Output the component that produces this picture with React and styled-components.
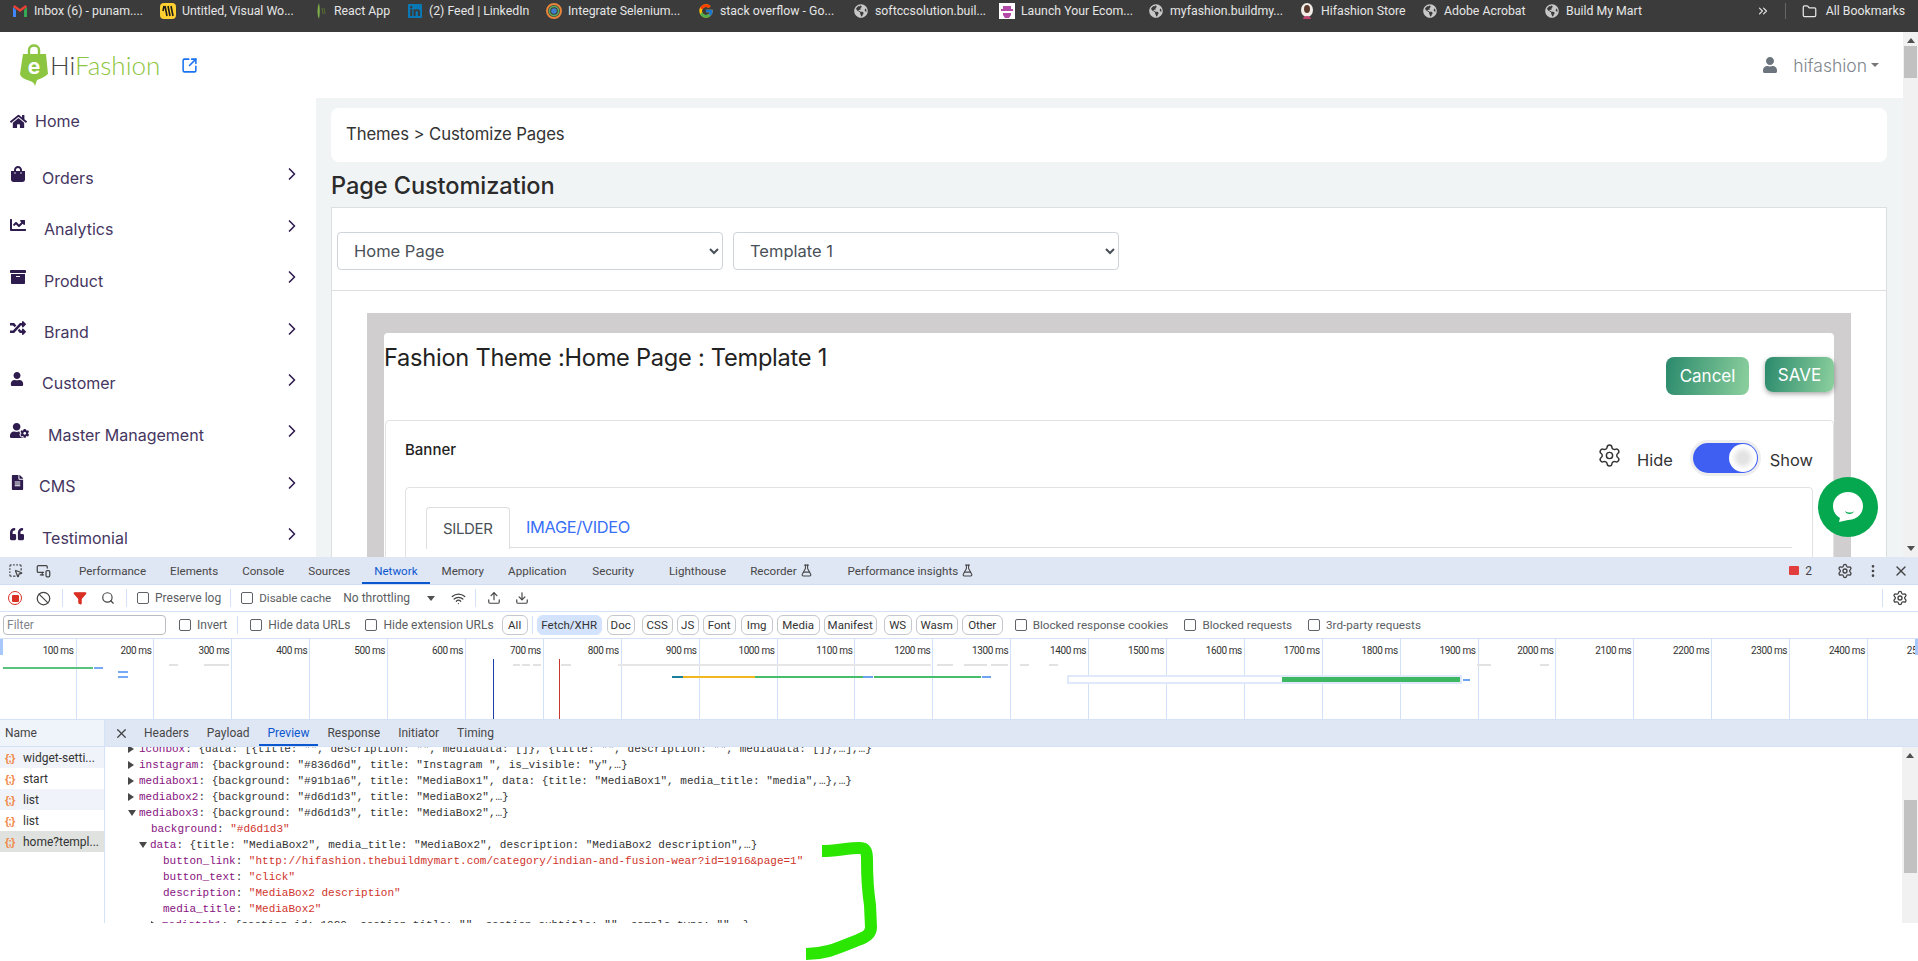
import React from 'react'
import styled, { createGlobalStyle } from 'styled-components'
import {
  FaHome, FaShoppingBag, FaChartLine, FaArchive, FaRandom, FaUser, FaUserCog,
  FaFileAlt, FaQuoteLeft, FaGlobeAmericas, FaLinkedin,
} from 'react-icons/fa'
import { FcGoogle } from 'react-icons/fc'
import {
  ChevronRight, Settings, SquareArrowOutUpRight, Search, Ban, Upload, Download,
  X, EllipsisVertical, FlaskConical, Filter as FilterIcon, Folder, Wifi, ChevronsRight,
  SquareDashedMousePointer, MonitorSmartphone,
} from 'lucide-react'

const GlobalStyle = createGlobalStyle`
  html, body { margin: 0; padding: 0; background: #fff; overflow: hidden; }
  * { box-sizing: border-box; }
`

const Screen = styled.div`
  position: relative;
  width: 1918px;
  height: 961px;
  overflow: hidden;
  display: flex;
  flex-direction: column;
  font-family: Inter, "Liberation Sans", sans-serif;
`

/* bookmarks bar */
const Bookmarks = styled.div`
  flex: 0 0 32px;
  background: #3b3b3b;
  display: flex;
  align-items: flex-start;
  padding: 2px 0 0 12px;
  color: #e6e6e6;
  font: 12.3px/18px Roboto, sans-serif;
  white-space: nowrap;
`
const Bookmark = styled.div`
  flex: 0 0 ${p => p.$w}px;
  display: flex;
  align-items: center;
  gap: 6px;
  overflow: hidden;
`
const Fav = styled.span`
  flex: 0 0 16px;
  height: 16px;
  display: flex;
  align-items: center;
  justify-content: center;
  color: ${p => p.$color || '#c8c8c8'};
`
const BarEnd = styled.div`
  margin-left: auto;
  display: flex;
  align-items: center;
  height: 18px;
  padding-right: 13px;
  gap: 9px;
`
const BarDivider = styled.span`
  width: 1px;
  height: 16px;
  background: #666;
  margin: 0 7px 0 6px;
`

/* page area */
const Viewport = styled.div`
  flex: 0 0 525px;
  display: flex;
  overflow: hidden;
`
const Page = styled.div`
  flex: 1;
  display: flex;
  flex-direction: column;
  min-width: 0;
`
const TopBar = styled.header`
  flex: 0 0 66px;
  background: #fff;
  display: flex;
  align-items: center;
  padding-left: 19px;
`
const LogoText = styled.span`
  font: 300 26px/1 Lato, sans-serif;
  color: #8cc540;
  margin: 0 21px 0 1px;
  b { font-weight: 300; color: #444; }
`
const UserMenu = styled.div`
  margin-left: auto;
  display: flex;
  align-items: center;
  color: #80868b;
  font-size: 17.5px;
  font-weight: 300;
  padding-right: 24px;
  gap: 15px;
  span { display: flex; align-items: center; gap: 4px; }
  i {
    width: 0; height: 0;
    border: 4px solid transparent;
    border-top-color: #777;
    border-bottom: 0;
  }
`
const Body = styled.div`
  flex: 1;
  display: flex;
  min-height: 0;
`
const Sidebar = styled.nav`
  flex: 0 0 316px;
  background: #fff;
  overflow: hidden;
`
const NavRow = styled.div`
  height: 51.45px;
  display: flex;
  align-items: center;
  padding: 0 14px 0 10px;
  color: #2f1c4e;
  font-size: 16px;
  svg { flex: none; }
`
const HomeLink = styled(NavRow)`
  height: 46px;
  margin-bottom: 7.5px;
`
const NavIcon = styled.span`
  flex: 0 0 auto;
  display: flex;
  margin-top: -7px;
`
const NavLabel = styled.span`
  margin-left: ${p => p.$ml}px;
  color: #45365f;
  padding-top: ${p => p.$home ? 0 : 1}px;
`
const NavArrow = styled.span`
  margin-left: auto;
  display: flex;
  margin-top: -6px;
`
const Main = styled.main`
  position: relative;
  flex: 1;
  background: #f1f4f5;
  padding: 10px 16px 0 15px;
  min-width: 0;
  overflow: hidden;
`
const Crumbs = styled.div`
  height: 54px;
  background: #fff;
  border-radius: 8px;
  display: flex;
  align-items: center;
  padding: 0 0 2px 15px;
  font-size: 16.7px;
  color: #333;
  letter-spacing: -0.1px;
`
const PageTitle = styled.h1`
  margin: 0;
  height: 45px;
  padding-top: 2px;
  display: flex;
  align-items: center;
  font-size: 23.6px;
  font-weight: 500;
  color: #2b2b2b;
  letter-spacing: -0.1px;
`
const SelectCard = styled.div`
  height: 84px;
  background: #fff;
  border: 1px solid #dcdfe2;
  display: flex;
  gap: 10px;
  padding: 24px 0 0 5px;
`
const Select = styled.select`
  width: 386px;
  height: 38px;
  padding-left: 12px;
  font: 16.5px Inter, sans-serif;
  color: #495057;
  background: #fff;
  border: 1px solid #ced4da;
  border-radius: 4px;
`
const EditorCard = styled.div`
  background: #fff;
  border: 1px solid #dcdfe2;
  border-top: 0;
  height: 400px;
  padding: 22px 35px 0 35px;
`
const GreyPanel = styled.div`
  background: #d0cecf;
  height: 400px;
  padding: 20px 17px 0 17px;
`
const ThemeCard = styled.div`
  background: #fff;
  border-radius: 4px;
  height: 380px;
  padding-left: 1px;
`
const ThemeHead = styled.div`
  height: 87px;
  display: flex;
  justify-content: space-between;
`
const ThemeTitle = styled.h2`
  margin: 12px 0 0 -1px;
  font-size: 23.6px;
  line-height: 26px;
  font-weight: 400;
  color: #222;
  letter-spacing: -0.25px;
`
const Actions = styled.div`
  display: flex;
  gap: 16px;
  padding-top: 24px;
  align-items: flex-start;
`
const GradientBtn = styled.button`
  height: ${p => p.$h}px;
  width: ${p => p.$w}px;
  border: 0;
  border-radius: 8px;
  background: linear-gradient(100deg, #2a8a6c, #8dd09e);
  color: #fff;
  font: 17px Inter, sans-serif;
  box-shadow: ${p => p.$raised ? '0 2px 5px rgba(0,0,0,.35)' : 'none'};
`
const SectionCard = styled.section`
  border: 1px solid #e2e2e2;
  border-radius: 4px;
  height: 300px;
  padding: 0 20px 0 19px;
`
const SectionHead = styled.div`
  height: 66px;
  display: flex;
  align-items: flex-start;
  justify-content: space-between;
`
const SectionName = styled.span`
  margin-top: 19px;
  font-size: 15px;
  font-weight: 500;
  color: #222;
`
const VisibleRow = styled.div`
  display: flex;
  align-items: center;
  margin-top: 25px;
  font-size: 16.4px;
  color: #333;
`
const GearIcon = styled(Settings)`
  color: #333;
  margin: -9px 15px 0 -1px;
`
const ToggleTrack = styled.span`
  width: 65px;
  height: 30px;
  margin: -3px 12px 0 20px;
  border-radius: 15px;
  background: #3f5ff2;
  box-shadow: 0 0 0 3px #eee;
  display: flex;
  justify-content: flex-end;
  padding: 1px;
`
const ToggleKnob = styled.span`
  width: 28px;
  height: 28px;
  border-radius: 50%;
  background: radial-gradient(circle, #e3e3e3 0 24%, #fff 60%, #f2f2f2);
`
const TabsBox = styled.div`
  border: 1px solid #e2e2e2;
  border-radius: 4px;
  height: 200px;
  padding: 19px 20px 0;
`
const TabsLine = styled.div`
  height: 41px;
  border-bottom: 1px solid #dedede;
  display: flex;
  align-items: stretch;
`
const Tab = styled.div`
  width: ${p => p.$active ? '84px' : 'auto'};
  height: ${p => p.$active ? '42px' : '40px'};
  padding: 0 16px;
  display: flex;
  align-items: center;
  font-size: ${p => p.$active ? 15 : 16.4}px;
  letter-spacing: -0.35px;
  background: #fff;
  color: ${p => p.$active ? '#495057' : '#3a6ff7'};
  border: ${p => p.$active ? '1px solid #dedede' : '0'};
  border-bottom: 0;
  border-radius: 4px 4px 0 0;
`
const ChatBubble = styled.div`
  position: absolute;
  left: 1502px;
  top: 379px;
  width: 60px;
  height: 60px;
  border-radius: 50%;
  background: #05a84f;
  display: flex;
  align-items: center;
  justify-content: center;
`

/* scrollbars */
const Scroll = styled.div`
  flex: 0 0 ${p => p.$w}px;
  position: relative;
  background: #f1f1f1;
  display: flex;
  flex-direction: column;
  align-items: center;
  padding-top: ${p => p.$pad}px;
`
const ScrollUp = styled.i`
  width: 0; height: 0;
  border: 4px solid transparent;
  border-top: 0;
  border-bottom: 5px solid #505050;
`
const ScrollDown = styled(ScrollUp)`
  position: absolute;
  bottom: 6px;
  border-bottom: 0;
  border-top: 5px solid #505050;
`
const ScrollThumb = styled.i`
  display: block;
  width: 13px;
  height: ${p => p.$h}px;
  margin-top: ${p => p.$top}px;
  background: #c1c1c1;
`

/* devtools */
const DevTools = styled.div`
  flex: 0 0 366px;
  display: flex;
  flex-direction: column;
  font: 12px Roboto, sans-serif;
  color: #444;
  overflow: hidden;
`
const DevTabs = styled.div`
  flex: 0 0 28px;
  background: #dfe6f4;
  border-bottom: 1px solid #cfdcf3;
  display: flex;
  align-items: stretch;
  padding-left: 1px;
  font-size: 11.6px;
`
const DevIcon = styled.span`
  flex: 0 0 28px;
  display: flex;
  align-items: center;
  justify-content: center;
  margin: 0 ${p => p.$mr || 0}px 0 ${p => p.$ml || 0}px;
  color: ${p => p.$color || '#444'};
`
const DevTab = styled.div`
  padding: 0 12px;
  margin-left: ${p => p.$ml || 0}px;
  display: flex;
  align-items: center;
  gap: 3px;
  color: ${p => p.$active ? '#0b57d0' : '#474747'};
  box-shadow: ${p => p.$active ? 'inset 0 -2px 0 #0b57d0' : 'none'};
`
const TabGroupGap = styled.span`
  flex: 0 0 10px;
`
const DevTabsEnd = styled.div`
  margin-left: auto;
  display: flex;
  align-items: center;
  padding-right: 3px;
`
const IssueCount = styled.span`
  display: flex;
  align-items: center;
  gap: 6px;
  margin-right: 19px;
  font-size: 12px;
  i {
    width: 10px; height: 9px;
    background: #e33e3e;
    border-radius: 1px;
  }
`
const ToolRow = styled.div`
  flex: 0 0 ${p => p.$h}px;
  background: #fff;
  border-bottom: 1px solid #d5e1f6;
  display: flex;
  align-items: center;
  padding-left: ${p => p.$pl || 0}px;
  white-space: nowrap;
`
const Divider = styled.span`
  flex: none;
  width: 1px;
  height: 18px;
  background: #d5e1f6;
  margin: 0 ${p => p.$mr ?? 8}px 0 ${p => p.$push ? 'auto' : `${p.$ml ?? 8}px`};
`
const Check = styled.label`
  display: flex;
  align-items: center;
  gap: 6px;
  margin-left: ${p => p.$ml || 0}px;
  font-size: ${p => p.$fs || 12}px;
  color: #5a5e63;
  input {
    width: 12px; height: 12px;
    margin: 0;
    appearance: none;
    border: 1px solid #5f6368;
    border-radius: 2px;
    background: #fff;
  }
`
const RecordDot = styled.span`
  width: 14px;
  height: 14px;
  border: 1.5px solid #d93025;
  border-radius: 50%;
  display: flex;
  align-items: center;
  justify-content: center;
  &::after { content: ''; width: 7px; height: 7px; background: #d93025; border-radius: 1px; }
`
const Throttle = styled.span`
  flex: 0 0 84px;
  margin-left: 12px;
  color: #5a5e63;
`
const ThrottleArrow = styled.i`
  width: 0; height: 0;
  border: 4px solid transparent;
  border-bottom: 0;
  border-top: 5px solid #505050;
`
const FilterBox = styled.div`
  width: 163px;
  height: 20px;
  margin-right: 13px;
  border: 1px solid #b9bcc1;
  border-radius: 4px;
  padding-left: 3px;
  font-size: 12px;
  line-height: 18px;
  color: #80868b;
`
const Chip = styled.span`
  flex: none;
  width: ${p => p.$w}px;
  margin-left: ${p => p.$ml ?? 4}px;
  height: 20px;
  display: flex;
  align-items: center;
  justify-content: center;
  border: 1px solid ${p => p.$on ? '#d3e3fd' : '#c4c7cc'};
  background: ${p => p.$on ? '#d3e3fd' : '#fff'};
  border-radius: 6px;
  color: #333;
  font-size: 11.5px;
`
const Timeline = styled.div`
  flex: 0 0 80px;
  position: relative;
  display: flex;
  margin-left: -1.4px;
  background: #fff;
  overflow: hidden;
`
const Tick = styled.div`
  flex: 0 0 77.9px;
  border-right: 1px solid #d3e1f8;
  text-align: right;
  padding: 5px 2px 0 0;
  font-size: 10px;
  letter-spacing: -0.4px;
  line-height: 13px;
  color: #333;
  white-space: nowrap;
`
const Overview = styled.svg`
  position: absolute;
  left: 1.4px;
  top: 0;
`
const Details = styled.div`
  flex: 0 0 204px;
  display: flex;
  border-top: 1px solid #d5e1f6;
`
const NameCol = styled.div`
  flex: 0 0 105px;
  border-right: 1px solid #d5e1f6;
  display: flex;
  flex-direction: column;
`
const NameHead = styled.div`
  flex: 0 0 27px;
  background: #eff3fa;
  border-bottom: 1px solid #d5e1f6;
  display: flex;
  align-items: center;
  padding-left: 5px;
`
const NameRow = styled.div`
  flex: 0 0 21px;
  display: flex;
  align-items: center;
  gap: 5px;
  padding-left: 5px;
  background: ${p => p.$selected ? '#e0e2df' : p.$alt ? '#f0f3f9' : '#fff'};
  color: #333;
  i {
    font: 700 11px "Liberation Sans", sans-serif;
    color: #f08a4b;
    letter-spacing: -1px;
    width: 13px;
  }
`
const NameFoot = styled.div`
  margin-top: auto;
  flex: 0 0 7px;
  border-top: 1px solid #d5e1f6;
`
const PreviewCol = styled.div`
  flex: 1;
  display: flex;
  flex-direction: column;
  min-width: 0;
`
const PreviewTabs = styled.div`
  flex: 0 0 27px;
  background: #dfe6f4;
  border-bottom: 1px solid #d5e1f6;
  display: flex;
  align-items: stretch;
  padding-left: 9px;
`
const CloseIcon = styled(X)`
  align-self: center;
`
const PreviewTab = styled.div`
  padding: 0 9px;
  display: flex;
  align-items: center;
  margin-left: ${p => p.$first ? 6 : 0}px;
  color: ${p => p.$active ? '#0b57d0' : '#474747'};
  box-shadow: ${p => p.$active ? 'inset 0 -2px 0 #0b57d0' : 'none'};
`
const PreviewBody = styled.div`
  flex: 1;
  display: flex;
  min-height: 0;
`
const JsonPane = styled.div`
  flex: 1;
  overflow: hidden;
  font: 11px/16px "Liberation Mono", monospace;
  color: #333;
  white-space: pre;
  > :first-child { margin-top: -6px; }
`
const JsonLine = styled.div`
  height: 16px;
  padding-left: ${p => p.$pl}px;
  display: flex;
  align-items: center;
`
const Caret = styled.i`
  flex: 0 0 8px;
  margin-right: 3px;
  width: 0; height: 0;
  border-style: solid;
  border-color: transparent;
  ${p => p.$open
    ? 'border-width: 6px 4px 0 4px; border-top-color: #474747; flex-basis: 8px;'
    : 'border-width: 4px 0 4px 6px; border-left-color: #474747; flex-basis: 6px; margin-right: 5px;'}
`
const Key = styled.span`
  color: #881280;
`
const Str = styled.span`
  color: #d0342c;
`
const Scribble = styled.svg`
  position: absolute;
  left: 0;
  top: 0;
  pointer-events: none;
`

const bookmarks = [
  { w: 148, text: 'Inbox (6) - punam....', fav: <GmailIcon /> },
  { w: 152, text: 'Untitled, Visual Wo...', fav: <MiroIcon /> },
  { w: 95, text: 'React App', fav: <ReactAppIcon /> },
  { w: 139, text: '(2) Feed | LinkedIn', fav: <FaLinkedin size={16} color="#0a78b5" /> },
  { w: 152, text: 'Integrate Selenium...', fav: <RingIcon /> },
  { w: 155, text: 'stack overflow - Go...', fav: <FcGoogle size={16} /> },
  { w: 146, text: 'softccsolution.buil...', fav: <FaGlobeAmericas size={14} /> },
  { w: 149, text: 'Launch Your Ecom...', fav: <LaunchIcon /> },
  { w: 151, text: 'myfashion.buildmy...', fav: <FaGlobeAmericas size={14} /> },
  { w: 123, text: 'Hifashion Store', fav: <AvatarIcon /> },
  { w: 122, text: 'Adobe Acrobat', fav: <FaGlobeAmericas size={14} /> },
  { w: 100, text: 'Build My Mart', fav: <FaGlobeAmericas size={14} /> },
]

const navItems = [
  { label: 'Orders', ml: 16, icon: <FaShoppingBag size={16} /> },
  { label: 'Analytics', ml: 18, icon: <FaChartLine size={16} /> },
  { label: 'Product', ml: 18, icon: <FaArchive size={16} /> },
  { label: 'Brand', ml: 18, icon: <FaRandom size={16} /> },
  { label: 'Customer', ml: 18, icon: <FaUser size={14} /> },
  { label: 'Master Management', ml: 19, icon: <FaUserCog size={19} /> },
  { label: 'CMS', ml: 14, icon: <FaFileAlt size={15} /> },
  { label: 'Testimonial', ml: 18, icon: <FaQuoteLeft size={14} /> },
]

const devTabs = ['Performance', 'Elements', 'Console', 'Sources', 'Network', 'Memory', 'Application', 'Security']

const chips = [
  { t: 'Doc', w: 28, ml: 5 }, { t: 'CSS', w: 31, ml: 7 }, { t: 'JS', w: 22 }, { t: 'Font', w: 33 },
  { t: 'Img', w: 32, ml: 5 }, { t: 'Media', w: 43 }, { t: 'Manifest', w: 53 }, { t: 'WS', w: 28, ml: 7 },
  { t: 'Wasm', w: 42 }, { t: 'Other', w: 41 },
]

const ticks = Array.from({ length: 25 }, (_, i) => `${(i + 1) * 100} ms`)

// x, width, y, height, colour of the network overview marks
const marks = [
  [3, 90, 28, 2, '#59c27c'], [94, 9, 28, 2, '#78a9f5'], [118, 10, 32, 2, '#78a9f5'], [118, 10, 37, 2, '#78a9f5'],
  [169, 9, 25, 2, '#e2e2e2'], [204, 25, 25, 2, '#e2e2e2'], [513, 7, 25, 2, '#e2e2e2'], [522, 8, 25, 2, '#e2e2e2'],
  [533, 8, 25, 2, '#e2e2e2'], [561, 10, 25, 2, '#e2e2e2'], [618, 313, 25, 2, '#e6e6e6'], [937, 16, 25, 2, '#e2e2e2'],
  [964, 23, 25, 2, '#e2e2e2'], [991, 17, 25, 2, '#e2e2e2'], [1020, 9, 25, 2, '#e2e2e2'], [1049, 9, 25, 2, '#e2e2e2'],
  [1477, 14, 25, 2, '#e2e2e2'], [1540, 9, 25, 2, '#e2e2e2'],
  [672, 11, 37, 2, '#1b7f9c'], [683, 72, 37, 2, '#f2b71f'], [755, 108, 37, 2, '#45bd6b'], [863, 10, 37, 2, '#6ea3f2'],
  [874, 107, 37, 2, '#45bd6b'], [982, 9, 37, 2, '#6ea3f2'],
  [1067, 395, 36, 9, '#dfe9fb'], [1069, 213, 38, 5, '#fff'], [1282, 178, 38, 5, '#3cb863'], [1463, 7, 40, 2, '#6ea3f2'],
  [493, 1, 20, 60, '#1c3fa8'], [559, 1, 20, 60, '#c8372d'],
  [0, 3, 0, 16, '#a8c7fa'], [1915, 3, 0, 16, '#a8c7fa'],
]

function GmailIcon() {
  return (
    <svg width="14" height="12" viewBox="0 0 14 12">
      <path d="M0 2v10h3V5z" fill="#4285f4" />
      <path d="M11 5v7h3V2z" fill="#34a853" />
      <path d="M0 2l7 5 7-5-1.5-2L7 4 1.5 0z" fill="#ea4335" />
    </svg>
  )
}

function MiroIcon() {
  return (
    <svg width="16" height="16" viewBox="0 0 16 16">
      <rect width="16" height="16" rx="4" fill="#ffd02f" />
      <path d="M5 3l2 10M8 3l2 10M11 3l2 10M4 3L3 8" stroke="#1a1a1a" strokeWidth="1.6" />
    </svg>
  )
}

function ReactAppIcon() {
  return (
    <svg width="12" height="16" viewBox="0 0 12 16">
      <path d="M5 0c1 5 1 11 0 16C3 12 3 5 5 0z" fill="#7fb24a" />
      <path d="M8 5l1 6M10 5l1 6" stroke="#59702f" strokeWidth="1" />
    </svg>
  )
}

function RingIcon() {
  return (
    <svg width="16" height="16" viewBox="0 0 16 16">
      <circle cx="8" cy="8" r="7" fill="none" stroke="#e8843a" strokeWidth="2" />
      <circle cx="8" cy="8" r="4.6" fill="none" stroke="#5ba85f" strokeWidth="1.6" />
      <circle cx="8" cy="8" r="2.8" fill="#3f7fd0" />
    </svg>
  )
}

function LaunchIcon() {
  return (
    <svg width="16" height="16" viewBox="0 0 16 16">
      <rect width="16" height="16" fill="#fff" />
      <path d="M4 3h8v3h2v2H2V6h2zM4 10h8v2l-2 3H6l-2-3z" fill="#b44aa8" />
    </svg>
  )
}

function AvatarIcon() {
  return (
    <svg width="14" height="16" viewBox="0 0 14 16">
      <ellipse cx="7" cy="7" rx="6" ry="7" fill="#f1ece6" />
      <ellipse cx="7" cy="6" rx="3" ry="4" fill="#5a3a2c" />
      <path d="M3 16c0-4 8-4 8 0z" fill="#c2426f" />
    </svg>
  )
}

function LogoBag() {
  return (
    <svg width="30" height="42" viewBox="0 0 30 42">
      <path d="M10 12V6c0-6 10-6 10 0v6" fill="none" stroke="#8cc540" strokeWidth="2.4" />
      <path d="M4 10h23l2 20c-3 3-8 5-11 6l-2 6c-1-3-2-4-5-5-5-2-9-3-10-7z" fill="#8cc540" />
      <text x="15" y="30" textAnchor="middle" fontFamily="Inter, sans-serif" fontWeight="700" fontSize="21" fill="#fff">e</text>
    </svg>
  )
}

function ChatIcon() {
  return (
    <svg width="32" height="32" viewBox="0 0 32 32">
      <path d="M16 1c8 0 15 6 15 14 0 9-8 14-15 14l-9 2 1-4C3 24 1 20 1 15 1 7 8 1 16 1z" fill="#fff" />
      <path d="M13 20c3 2 7 2 9 0-1 4-8 4-9 0z" fill="#05a84f" />
    </svg>
  )
}

function ScribbleMark() {
  return (
    <Scribble width="1918" height="961" viewBox="0 0 1918 961">
      <path
        d="M822 851 C835 851 848 848 860 848 C866 848 867 852 867 860 C867 880 868 892 870 905 L871 927 C871 934 866 937 858 940 C838 948 826 954 806 954"
        fill="none"
        stroke="#2ae600"
        strokeWidth="12"
      />
    </Scribble>
  )
}

const App = () => {
  return (
    <Screen>
      <GlobalStyle />
      <Bookmarks>
        {bookmarks.map(b => (
          <Bookmark key={b.text} $w={b.w}>
            <Fav>{b.fav}</Fav>
            {b.text}
          </Bookmark>
        ))}
        <BarEnd>
          <ChevronsRight size={14} />
          <BarDivider />
          <Folder size={15} />
          All Bookmarks
        </BarEnd>
      </Bookmarks>

      <Viewport>
        <Page>
          <TopBar>
            <LogoBag />
            <LogoText><b>Hi</b>Fashion</LogoText>
            <SquareArrowOutUpRight size={17} color="#1a73f0" strokeWidth={2.2} />
            <UserMenu>
              <FaUser size={16} color="#6c757d" />
              <span>hifashion <i /></span>
            </UserMenu>
          </TopBar>
          <Body>
            <Sidebar>
              <HomeLink>
                <FaHome size={17} />
                <NavLabel $ml={8} $home>Home</NavLabel>
              </HomeLink>
              {navItems.map(item => (
                <NavRow key={item.label}>
                  <NavIcon>{item.icon}</NavIcon>
                  <NavLabel $ml={item.ml}>{item.label}</NavLabel>
                  <NavArrow><ChevronRight size={20} strokeWidth={2} /></NavArrow>
                </NavRow>
              ))}
            </Sidebar>
            <Main>
              <Crumbs>Themes &gt; Customize Pages</Crumbs>
              <PageTitle>Page Customization</PageTitle>
              <SelectCard>
                <Select defaultValue="home"><option value="home">Home Page</option></Select>
                <Select defaultValue="t1"><option value="t1">Template 1</option></Select>
              </SelectCard>
              <EditorCard>
                <GreyPanel>
                  <ThemeCard>
                    <ThemeHead>
                      <ThemeTitle>Fashion Theme :Home Page : Template 1</ThemeTitle>
                      <Actions>
                        <GradientBtn $w={83} $h={38}>Cancel</GradientBtn>
                        <GradientBtn $w={69} $h={35} $raised>SAVE</GradientBtn>
                      </Actions>
                    </ThemeHead>
                    <SectionCard>
                      <SectionHead>
                        <SectionName>Banner</SectionName>
                        <VisibleRow>
                          <GearIcon size={25} strokeWidth={1.4} />
                          Hide
                          <ToggleTrack><ToggleKnob /></ToggleTrack>
                          Show
                        </VisibleRow>
                      </SectionHead>
                      <TabsBox>
                        <TabsLine>
                          <Tab $active>SILDER</Tab>
                          <Tab>IMAGE/VIDEO</Tab>
                        </TabsLine>
                      </TabsBox>
                    </SectionCard>
                  </ThemeCard>
                </GreyPanel>
              </EditorCard>
              <ChatBubble><ChatIcon /></ChatBubble>
            </Main>
          </Body>
        </Page>
        <Scroll $w={15} $pad={6}>
          <ScrollUp />
          <ScrollThumb $h={32} $top={3} />
          <ScrollDown />
        </Scroll>
      </Viewport>

      <DevTools>
        <DevTabs>
          <DevIcon><SquareDashedMousePointer size={15} /></DevIcon>
          <DevIcon><MonitorSmartphone size={15} /></DevIcon>
          <TabGroupGap />
          {devTabs.map(t => <DevTab key={t} $active={t === 'Network'} $ml={t === 'Security' ? 2 : 0}>{t}</DevTab>)}
          <DevTab $ml={11}>Lighthouse</DevTab>
          <DevTab>Recorder <FlaskConical size={13} /></DevTab>
          <DevTab $ml={11}>Performance insights <FlaskConical size={13} /></DevTab>
          <DevTabsEnd>
            <IssueCount><i /> 2</IssueCount>
            <DevIcon><Settings size={16} /></DevIcon>
            <DevIcon><EllipsisVertical size={16} /></DevIcon>
            <DevIcon><X size={16} /></DevIcon>
          </DevTabsEnd>
        </DevTabs>

        <ToolRow $h={27} $pl={1}>
          <DevIcon><RecordDot /></DevIcon>
          <DevIcon><Ban size={15} /></DevIcon>
          <Divider $ml={5} $mr={3} />
          <DevIcon $color="#d93025"><FilterIcon size={14} fill="#d93025" /></DevIcon>
          <DevIcon><Search size={14} /></DevIcon>
          <Divider $ml={4} $mr={10} />
          <Check><input type="checkbox" />Preserve log</Check>
          <Divider $ml={9} $mr={10} />
          <Check $fs={11.6}><input type="checkbox" />Disable cache</Check>
          <Throttle>No throttling</Throttle>
          <ThrottleArrow />
          <DevIcon $ml={9}><Wifi size={15} /></DevIcon>
          <Divider $ml={3} $mr={4} />
          <DevIcon><Upload size={14} /></DevIcon>
          <DevIcon><Download size={14} /></DevIcon>
          <Divider $push $mr={3} />
          <DevIcon $mr={4}><Settings size={16} /></DevIcon>
        </ToolRow>

        <ToolRow $h={27} $pl={3}>
          <FilterBox>Filter</FilterBox>
          <Check><input type="checkbox" />Invert</Check>
          <Divider $ml={10} $mr={12} />
          <Check><input type="checkbox" />Hide data URLs</Check>
          <Check $ml={15}><input type="checkbox" />Hide extension URLs</Check>
          <Chip $w={26} $ml={8}>All</Chip>
          <Divider $ml={4} $mr={4} />
          <Chip $w={65} $ml={0} $on>Fetch/XHR</Chip>
          {chips.map(c => <Chip key={c.t} $w={c.w} $ml={c.ml}>{c.t}</Chip>)}
          <Check $ml={12} $fs={11.7}><input type="checkbox" />Blocked response cookies</Check>
          <Check $ml={16} $fs={11.7}><input type="checkbox" />Blocked requests</Check>
          <Check $ml={16} $fs={11.7}><input type="checkbox" />3rd-party requests</Check>
        </ToolRow>

        <Timeline>
          {ticks.map(t => <Tick key={t}>{t}</Tick>)}
          <Overview width="1918" height="80" viewBox="0 0 1918 80">
            {marks.map(([x, w, y, h, c], i) => (
              <rect key={i} x={x} y={y} width={w} height={h} fill={c} />
            ))}
          </Overview>
        </Timeline>

        <Details>
          <NameCol>
            <NameHead>Name</NameHead>
            <NameRow $alt><i>{'{;}'}</i>widget-setti...</NameRow>
            <NameRow><i>{'{;}'}</i>start</NameRow>
            <NameRow $alt><i>{'{;}'}</i>list</NameRow>
            <NameRow><i>{'{;}'}</i>list</NameRow>
            <NameRow $selected><i>{'{;}'}</i>home?templ...</NameRow>
            <NameFoot />
          </NameCol>
          <PreviewCol>
            <PreviewTabs>
              <CloseIcon size={15} />
              <PreviewTab $first>Headers</PreviewTab>
              <PreviewTab>Payload</PreviewTab>
              <PreviewTab $active>Preview</PreviewTab>
              <PreviewTab>Response</PreviewTab>
              <PreviewTab>Initiator</PreviewTab>
              <PreviewTab>Timing</PreviewTab>
            </PreviewTabs>
            <PreviewBody>
              <JsonPane>
                <JsonLine $pl={23}><Caret /><Key>iconbox</Key>: {'{'}data: [{'{'}title: "", description: "", mediadata: []{'}'}, {'{'}title: "", description: "", mediadata: []{'}'},…],…{'}'}</JsonLine>
                <JsonLine $pl={23}><Caret /><Key>instagram</Key>: {'{'}background: "#836d6d", title: "Instagram ", is_visible: "y",…{'}'}</JsonLine>
                <JsonLine $pl={23}><Caret /><Key>mediabox1</Key>: {'{'}background: "#91b1a6", title: "MediaBox1", data: {'{'}title: "MediaBox1", media_title: "media",…{'}'},…{'}'}</JsonLine>
                <JsonLine $pl={23}><Caret /><Key>mediabox2</Key>: {'{'}background: "#d6d1d3", title: "MediaBox2",…{'}'}</JsonLine>
                <JsonLine $pl={23}><Caret $open /><Key>mediabox3</Key>: {'{'}background: "#d6d1d3", title: "MediaBox2",…{'}'}</JsonLine>
                <JsonLine $pl={46}><Key>background</Key>: <Str>"#d6d1d3"</Str></JsonLine>
                <JsonLine $pl={34}><Caret $open /><Key>data</Key>: {'{'}title: "MediaBox2", media_title: "MediaBox2", description: "MediaBox2 description",…{'}'}</JsonLine>
                <JsonLine $pl={58}><Key>button_link</Key>: <Str>"http://hifashion.thebuildmymart.com/category/indian-and-fusion-wear?id=1916&amp;page=1"</Str></JsonLine>
                <JsonLine $pl={58}><Key>button_text</Key>: <Str>"click"</Str></JsonLine>
                <JsonLine $pl={58}><Key>description</Key>: <Str>"MediaBox2 description"</Str></JsonLine>
                <JsonLine $pl={58}><Key>media_title</Key>: <Str>"MediaBox2"</Str></JsonLine>
                <JsonLine $pl={46}><Caret /><Key>mediatab1</Key>: {'{'}section_id: 1020, section_title: "", section_subtitle: "", sample_type: "",…{'}'}</JsonLine>
              </JsonPane>
              <Scroll $w={16} $pad={6}>
                <ScrollUp />
                <ScrollThumb $h={73} $top={42} />
              </Scroll>
            </PreviewBody>
          </PreviewCol>
        </Details>
      </DevTools>

      <ScribbleMark />
    </Screen>
  )
}

export default App
